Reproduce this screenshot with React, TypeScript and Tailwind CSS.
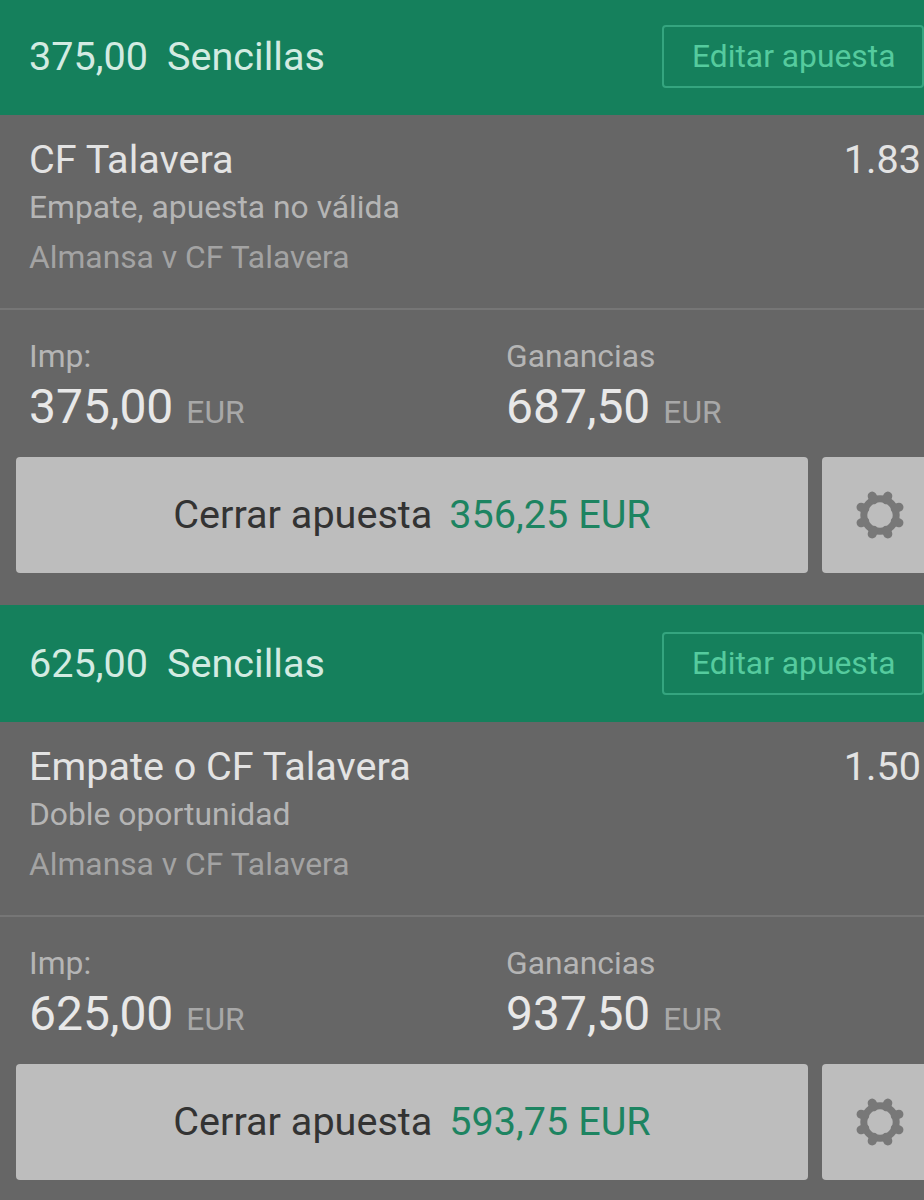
import React from 'react';

const bets = [
  { stake: '375,00', pick: 'CF Talavera', odds: '1.83', market: 'Empate, apuesta no válida', winnings: '687,50', cashout: '356,25 EUR' },
  { stake: '625,00', pick: 'Empate o CF Talavera', odds: '1.50', market: 'Doble oportunidad', winnings: '937,50', cashout: '593,75 EUR' },
];

const teeth = [22.5, 67.5, 112.5, 157.5, 202.5, 247.5, 292.5, 337.5];

const Gear = () => (
  <svg width="50" height="50" viewBox="0 0 50 50" fill="none">
    <circle cx="25" cy="25" r="16.2" stroke="#787878" strokeWidth="7" />
    {teeth.map(a => (
      <path key={a} d="M25 4.5v4" stroke="#787878" strokeWidth="9" strokeLinecap="round" transform={`rotate(${a} 25 25)`} />
    ))}
  </svg>
);

const BetCard = ({ bet }: { bet: (typeof bets)[number] }) => (
  <section>
    {/* Header */}
    <div className="h-[117px] bg-[#15805c] flex items-center justify-between pl-[29px]">
      <p className="text-[39.6px] text-[#d3ebe2]">
        {bet.stake}
        <span className="ml-[19px]">Sencillas</span>
      </p>
      <button className="w-[262px] h-[63px] border-2 border-[#35a57f] rounded-[4px] text-[31.8px] text-[#55cb9e] text-left pl-[28px]">
        Editar apuesta
      </button>
    </div>

    {/* Selection */}
    <div className="h-[490px] bg-[#666666]">
      <div className="h-[195px] border-b-2 border-[#767676] pl-[29px] pr-[3px] pt-[21px]">
        <div className="flex justify-between text-[39.6px] leading-[48px] text-[#e3e3e3]">
          <span>{bet.pick}</span>
          <span>{bet.odds}</span>
        </div>
        <p className="text-[31.8px] leading-[46px] text-[#b5b5b5]">{bet.market}</p>
        <p className="text-[31.8px] leading-[54px] text-[#a3a3a3]">Almansa v CF Talavera</p>
      </div>

      {/* Stake and winnings */}
      <div className="flex pl-[29px] pt-[24px] h-[147px]">
        <div className="w-[477px]">
          <p className="text-[31.8px] leading-[44px] text-[#b5b5b5]">Imp:</p>
          <p className="text-[48px] leading-[58px] text-[#e8e8e8]">
            {bet.stake}
            <span className="ml-[13px] text-[31.8px] text-[#a8a8a8]">EUR</span>
          </p>
        </div>
        <div>
          <p className="text-[31.8px] leading-[44px] text-[#b5b5b5]">Ganancias</p>
          <p className="text-[48px] leading-[58px] text-[#e8e8e8]">
            {bet.winnings}
            <span className="ml-[13px] text-[31.8px] text-[#a8a8a8]">EUR</span>
          </p>
        </div>
      </div>

      {/* Actions */}
      <div className="flex pl-[16px] gap-[14px]">
        <button className="w-[792px] h-[116px] bg-[#bdbdbd] rounded-[4px] flex items-center justify-center text-[39.6px]">
          <span className="text-[#333333]">Cerrar apuesta</span>
          <span className="ml-[17px] text-[#1d8461]">{bet.cashout}</span>
        </button>
        <button className="flex-1 h-[116px] bg-[#bdbdbd] rounded-l-[4px] flex items-center pl-[33px]">
          <Gear />
        </button>
      </div>
    </div>
  </section>
);

export default function App() {
  return (
    <div className="w-[924px] h-[1200px] overflow-hidden bg-[#666666] font-['Roboto',sans-serif]">
      <div className="-mt-[2px]">
        {bets.map(b => <BetCard key={b.stake} bet={b} />)}
      </div>
    </div>
  );
}
